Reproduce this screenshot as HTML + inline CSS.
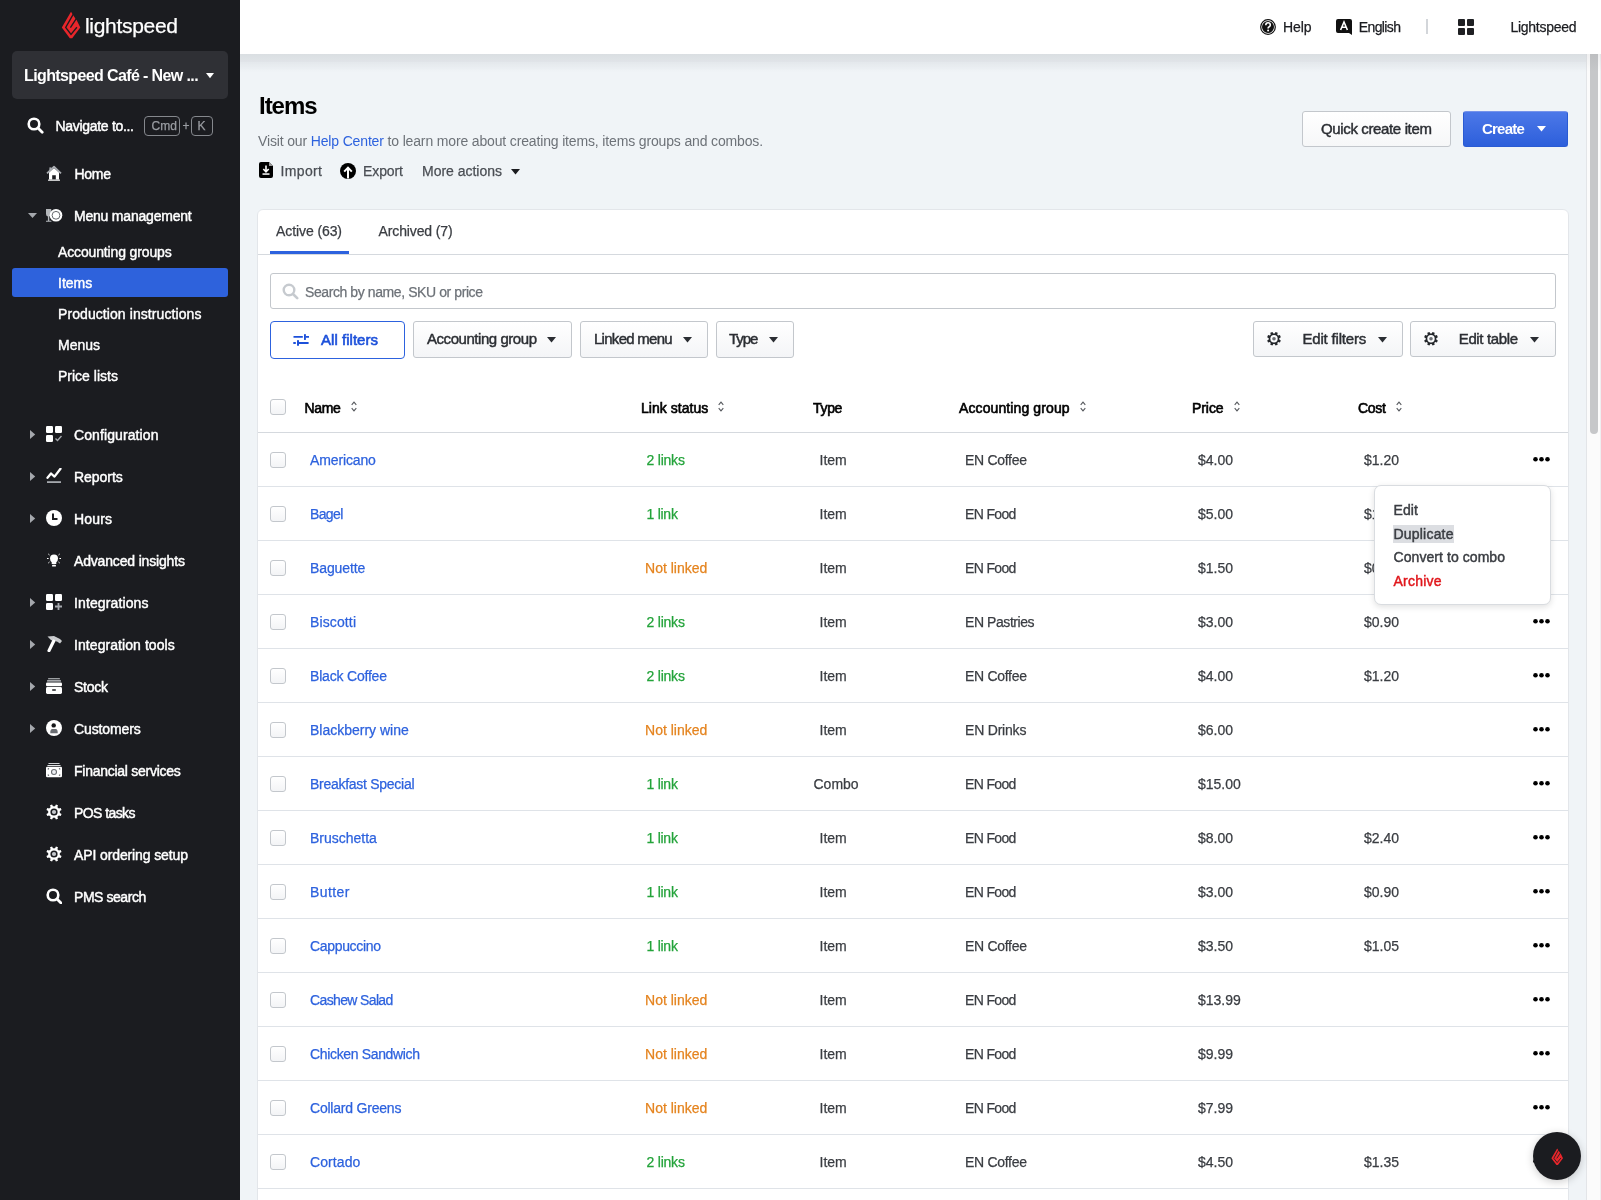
<!DOCTYPE html><html><head><meta charset="utf-8"><style>
html,body{margin:0;padding:0;width:1601px;height:1200px;overflow:hidden;background:#f0f4f7;font-family:"Liberation Sans",sans-serif;}
#root{position:relative;width:1601px;height:1200px;overflow:hidden;will-change:transform;}
</style></head><body><div id="root">
<div style="position:absolute;left:0px;top:0px;width:240px;height:1200px;background:#1b1c20;"></div>
<svg style="position:absolute;left:58px;top:8px" width="28" height="34" viewBox="0 0 28 34"><path d="M13 3.8 L17.5 10.8 L18.6 12 L22.3 19.5 L14.2 30.2 L11.8 30.2 L3.8 19.5 Z" fill="#e8262b"/><path d="M15.6 5.6 L7.7 19.5 L13 26.4 L18.9 19.2 M18.3 10.6 L12.4 19.7" fill="none" stroke="#1b1c20" stroke-width="1.35" stroke-linejoin="miter"/></svg>
<div style="position:absolute;left:85px;top:15px;font-size:21px;line-height:21px;color:#fff;white-space:nowrap;letter-spacing:-0.304px;-webkit-text-stroke:0.25px #fff;">lightspeed</div>
<div style="position:absolute;left:12px;top:51px;width:216px;height:48px;background:#2f3035;border-radius:5px;"></div>
<div style="position:absolute;left:24px;top:68px;font-size:16px;line-height:16px;color:#fff;white-space:nowrap;font-weight:bold;letter-spacing:-0.615px;">Lightspeed Café - New ...</div>
<svg style="position:absolute;left:205.5px;top:73px" width="8" height="6" viewBox="0 0 8 6"><path d="M0 0 H8 L4 5.3 Z" fill="#fff"/></svg>
<svg style="position:absolute;left:27px;top:117px" width="17" height="17" viewBox="0 0 17 17"><circle cx="7" cy="7" r="5.3" fill="none" stroke="#fff" stroke-width="2.6"/><path d="M11 11 L15.2 15.2" stroke="#fff" stroke-width="2.8" stroke-linecap="round"/></svg>
<div style="position:absolute;left:55.5px;top:119px;font-size:14px;line-height:14px;color:#fff;white-space:nowrap;letter-spacing:-0.307px;-webkit-text-stroke:0.45px #fff;">Navigate to...</div>
<div style="position:absolute;left:144px;top:116px;width:34px;height:18px;border:1px solid #85888d;border-radius:4px;"></div>
<div style="position:absolute;left:151.5px;top:120px;font-size:12px;line-height:12px;color:#9a9da2;white-space:nowrap;-webkit-text-stroke:0.25px #9a9da2;font-family:"Liberation Mono",monospace;letter-spacing:-0.9px;">Cmd</div>
<div style="position:absolute;left:182.5px;top:120px;font-size:12px;line-height:12px;color:#9a9da2;white-space:nowrap;-webkit-text-stroke:0.25px #9a9da2;">+</div>
<div style="position:absolute;left:191px;top:116px;width:20px;height:18px;border:1px solid #85888d;border-radius:4px;"></div>
<div style="position:absolute;left:197.5px;top:120px;font-size:12px;line-height:12px;color:#9a9da2;white-space:nowrap;-webkit-text-stroke:0.25px #9a9da2;font-family:"Liberation Mono",monospace;">K</div>
<svg style="position:absolute;left:46px;top:165px" width="16" height="16" viewBox="0 0 16 16"><path d="M3 7.5 L8 3 L13 7.5 V14.6 H9.8 V10.2 H6.2 V14.6 H3 Z" fill="#fff"/><rect x="2" y="14.4" width="12" height="1.4" rx="0.5" fill="#fff"/><path d="M1 8.4 L8 1.6 L15 8.4" fill="none" stroke="#a9acb1" stroke-width="1.7" stroke-linejoin="round"/><rect x="3.4" y="2.4" width="2" height="3" fill="#a9acb1"/></svg>
<div style="position:absolute;left:74.5px;top:167px;font-size:14px;line-height:14px;color:#fff;white-space:nowrap;letter-spacing:-0.282px;-webkit-text-stroke:0.45px #fff;">Home</div>
<svg style="position:absolute;left:28px;top:213px" width="9" height="6" viewBox="0 0 9 6"><path d="M0 0 H9 L4.5 5 Z" fill="#a5a8ad"/></svg>
<svg style="position:absolute;left:45px;top:207px" width="18" height="16" viewBox="0 0 18 16"><path d="M1 2 H6.2 V7 Q6.2 9.3 4.3 9.6 V13.8 H6.4 V14.8 H1 V13.8 H2.9 V9.6 Q1 9.3 1 7 Z" fill="#b4b7bb"/><circle cx="11" cy="8.3" r="6.3" fill="#fff"/><circle cx="11" cy="8.3" r="3.9" fill="none" stroke="#55585d" stroke-width="0.9"/></svg>
<div style="position:absolute;left:74px;top:209px;font-size:14px;line-height:14px;color:#fff;white-space:nowrap;letter-spacing:-0.209px;-webkit-text-stroke:0.45px #fff;">Menu management</div>
<div style="position:absolute;left:12px;top:268px;width:216px;height:29px;background:#2e62dc;border-radius:3px;"></div>
<div style="position:absolute;left:58px;top:245px;font-size:14px;line-height:14px;color:#fff;white-space:nowrap;letter-spacing:-0.142px;-webkit-text-stroke:0.4px #fff;">Accounting groups</div>
<div style="position:absolute;left:58px;top:276px;font-size:14px;line-height:14px;color:#fff;white-space:nowrap;-webkit-text-stroke:0.4px #fff;">Items</div>
<div style="position:absolute;left:58px;top:307px;font-size:14px;line-height:14px;color:#fff;white-space:nowrap;letter-spacing:0.081px;-webkit-text-stroke:0.4px #fff;">Production instructions</div>
<div style="position:absolute;left:58px;top:338px;font-size:14px;line-height:14px;color:#fff;white-space:nowrap;-webkit-text-stroke:0.4px #fff;">Menus</div>
<div style="position:absolute;left:58px;top:369px;font-size:14px;line-height:14px;color:#fff;white-space:nowrap;-webkit-text-stroke:0.4px #fff;">Price lists</div>
<svg style="position:absolute;left:30px;top:430px" width="6" height="9" viewBox="0 0 6 9"><path d="M0 0 V9 L5.2 4.5 Z" fill="#a5a8ad"/></svg>
<svg style="position:absolute;left:46px;top:426px" width="16" height="16" viewBox="0 0 16 16"><rect x="0" y="0" width="7" height="7" rx="1.2" fill="#fff"/><rect x="9" y="0" width="7" height="7" rx="1.2" fill="#fff"/><rect x="0" y="9" width="7" height="7" rx="1.2" fill="#fff"/><path d="M9.5 12.5 L11.5 14.5 L15.5 10" fill="none" stroke="#a5a8ad" stroke-width="1.4"/></svg>
<div style="position:absolute;left:74px;top:428px;font-size:14px;line-height:14px;color:#fff;white-space:nowrap;letter-spacing:0.102px;-webkit-text-stroke:0.45px #fff;">Configuration</div>
<svg style="position:absolute;left:30px;top:472px" width="6" height="9" viewBox="0 0 6 9"><path d="M0 0 V9 L5.2 4.5 Z" fill="#a5a8ad"/></svg>
<svg style="position:absolute;left:46px;top:468px" width="16" height="16" viewBox="0 0 16 16"><path d="M1.5 9.8 L5 5.5 L8.5 8.6 L14.5 0.8" fill="none" stroke="#fff" stroke-width="2.3" stroke-linejoin="round" stroke-linecap="round"/><rect x="1" y="13.2" width="14" height="1.8" fill="#a5a8ad"/></svg>
<div style="position:absolute;left:74px;top:470px;font-size:14px;line-height:14px;color:#fff;white-space:nowrap;letter-spacing:-0.037px;-webkit-text-stroke:0.45px #fff;">Reports</div>
<svg style="position:absolute;left:30px;top:514px" width="6" height="9" viewBox="0 0 6 9"><path d="M0 0 V9 L5.2 4.5 Z" fill="#a5a8ad"/></svg>
<svg style="position:absolute;left:46px;top:510px" width="16" height="16" viewBox="0 0 16 16"><circle cx="8" cy="8" r="8" fill="#fff"/><path d="M7 3.5 V9 H11.5" fill="none" stroke="#1b1c20" stroke-width="2"/></svg>
<div style="position:absolute;left:74px;top:512px;font-size:14px;line-height:14px;color:#fff;white-space:nowrap;letter-spacing:0.164px;-webkit-text-stroke:0.45px #fff;">Hours</div>
<svg style="position:absolute;left:46px;top:552px" width="16" height="16" viewBox="0 0 16 16"><path d="M8 2.5 Q12 2.5 12 6.5 Q12 8.8 10.3 10.2 V12 H5.7 V10.2 Q4 8.8 4 6.5 Q4 2.5 8 2.5 Z" fill="#fff"/><rect x="6" y="12.8" width="4" height="1.8" rx="0.9" fill="#fff"/><path d="M1 6.5 H2.6 M13.4 6.5 H15 M2.3 2 L3.5 3 M13.7 2 L12.5 3 M2.3 11 L3.5 10 M13.7 11 L12.5 10" stroke="#fff" stroke-width="1"/></svg>
<div style="position:absolute;left:74px;top:554px;font-size:14px;line-height:14px;color:#fff;white-space:nowrap;letter-spacing:-0.170px;-webkit-text-stroke:0.45px #fff;">Advanced insights</div>
<svg style="position:absolute;left:30px;top:598px" width="6" height="9" viewBox="0 0 6 9"><path d="M0 0 V9 L5.2 4.5 Z" fill="#a5a8ad"/></svg>
<svg style="position:absolute;left:46px;top:594px" width="16" height="16" viewBox="0 0 16 16"><rect x="0" y="0" width="7" height="7" rx="1.2" fill="#fff"/><rect x="9" y="0" width="7" height="7" rx="1.2" fill="#fff"/><rect x="0" y="9" width="7" height="7" rx="1.2" fill="#fff"/><path d="M12.5 9 V16 M9 12.5 H16" stroke="#a5a8ad" stroke-width="1.8"/></svg>
<div style="position:absolute;left:74px;top:596px;font-size:14px;line-height:14px;color:#fff;white-space:nowrap;letter-spacing:0.122px;-webkit-text-stroke:0.45px #fff;">Integrations</div>
<svg style="position:absolute;left:30px;top:640px" width="6" height="9" viewBox="0 0 6 9"><path d="M0 0 V9 L5.2 4.5 Z" fill="#a5a8ad"/></svg>
<svg style="position:absolute;left:46px;top:636px" width="16" height="16" viewBox="0 0 16 16"><path d="M1.5 0.6 L8 0 L14 3 L16 5 L14 7.6 L11 5.6 L7 5 L5 4 Z" fill="#c9cbce"/><path d="M7.6 5.2 L3 14.6" stroke="#fff" stroke-width="3.2" stroke-linecap="round"/></svg>
<div style="position:absolute;left:74px;top:638px;font-size:14px;line-height:14px;color:#fff;white-space:nowrap;letter-spacing:0.071px;-webkit-text-stroke:0.45px #fff;">Integration tools</div>
<svg style="position:absolute;left:30px;top:682px" width="6" height="9" viewBox="0 0 6 9"><path d="M0 0 V9 L5.2 4.5 Z" fill="#a5a8ad"/></svg>
<svg style="position:absolute;left:46px;top:678px" width="16" height="16" viewBox="0 0 16 16"><rect x="2" y="0.2" width="12" height="1.1" rx="0.5" fill="#c8cacd"/><rect x="1" y="2.2" width="14" height="1.2" rx="0.5" fill="#d6d8db"/><rect x="0" y="4.6" width="16" height="3.6" rx="1.2" fill="#fff"/><rect x="0" y="9" width="16" height="7" rx="1.4" fill="#fff"/><rect x="6" y="11.3" width="4" height="1.4" rx="0.7" fill="#1b1c20"/></svg>
<div style="position:absolute;left:74px;top:680px;font-size:14px;line-height:14px;color:#fff;white-space:nowrap;letter-spacing:-0.254px;-webkit-text-stroke:0.45px #fff;">Stock</div>
<svg style="position:absolute;left:30px;top:724px" width="6" height="9" viewBox="0 0 6 9"><path d="M0 0 V9 L5.2 4.5 Z" fill="#a5a8ad"/></svg>
<svg style="position:absolute;left:46px;top:720px" width="16" height="16" viewBox="0 0 16 16"><circle cx="8" cy="8" r="8" fill="#fff"/><path d="M4.3 13.2 Q4 9.6 6 8.9 H10 Q12 9.6 11.7 13.2 Z" fill="#6b6e73"/><circle cx="7.7" cy="5.4" r="2.2" fill="#151618"/></svg>
<div style="position:absolute;left:74px;top:722px;font-size:14px;line-height:14px;color:#fff;white-space:nowrap;letter-spacing:-0.117px;-webkit-text-stroke:0.45px #fff;">Customers</div>
<svg style="position:absolute;left:46px;top:762px" width="16" height="16" viewBox="0 0 16 16"><rect x="2.3" y="0.9" width="11.4" height="1.1" rx="0.5" fill="#d0d2d5"/><rect x="1.3" y="2.9" width="13.4" height="1.1" rx="0.5" fill="#e0e2e4"/><rect x="0" y="4.8" width="16" height="10.4" rx="1.3" fill="#fff"/><circle cx="8" cy="10" r="2.5" fill="#eef0f4" stroke="#6b6e73" stroke-width="1.1"/><path d="M1.8 7.4 L2.9 6.3 M14.2 7.4 L13.1 6.3 M1.8 12.6 L2.9 13.7 M14.2 12.6 L13.1 13.7" stroke="#55585d" stroke-width="1.1"/></svg>
<div style="position:absolute;left:74px;top:764px;font-size:14px;line-height:14px;color:#fff;white-space:nowrap;letter-spacing:-0.265px;-webkit-text-stroke:0.45px #fff;">Financial services</div>
<svg style="position:absolute;left:46px;top:804px" width="16" height="16" viewBox="0 0 16 16"><path fill="#fff" d="M13.81 9.01 L15.55 9.94 L14.71 11.97 L12.83 11.39 L11.39 12.83 L11.97 14.71 L9.94 15.55 L9.01 13.81 L6.99 13.81 L6.06 15.55 L4.03 14.71 L4.61 12.83 L3.17 11.39 L1.29 11.97 L0.45 9.94 L2.19 9.01 L2.19 6.99 L0.45 6.06 L1.29 4.03 L3.17 4.61 L4.61 3.17 L4.03 1.29 L6.06 0.45 L6.99 2.19 L9.01 2.19 L9.94 0.45 L11.97 1.29 L11.39 3.17 L12.83 4.61 L14.71 4.03 L15.55 6.06 L13.81 6.99 Z"/><circle cx="8" cy="8" r="3.6" fill="#1b1c20"/><circle cx="8" cy="8" r="2.1" fill="#c5c8cd"/></svg>
<div style="position:absolute;left:74px;top:806px;font-size:14px;line-height:14px;color:#fff;white-space:nowrap;letter-spacing:-0.579px;-webkit-text-stroke:0.45px #fff;">POS tasks</div>
<svg style="position:absolute;left:46px;top:846px" width="16" height="16" viewBox="0 0 16 16"><path fill="#fff" d="M13.81 9.01 L15.55 9.94 L14.71 11.97 L12.83 11.39 L11.39 12.83 L11.97 14.71 L9.94 15.55 L9.01 13.81 L6.99 13.81 L6.06 15.55 L4.03 14.71 L4.61 12.83 L3.17 11.39 L1.29 11.97 L0.45 9.94 L2.19 9.01 L2.19 6.99 L0.45 6.06 L1.29 4.03 L3.17 4.61 L4.61 3.17 L4.03 1.29 L6.06 0.45 L6.99 2.19 L9.01 2.19 L9.94 0.45 L11.97 1.29 L11.39 3.17 L12.83 4.61 L14.71 4.03 L15.55 6.06 L13.81 6.99 Z"/><circle cx="8" cy="8" r="3.6" fill="#1b1c20"/><circle cx="8" cy="8" r="2.1" fill="#c5c8cd"/></svg>
<div style="position:absolute;left:74px;top:848px;font-size:14px;line-height:14px;color:#fff;white-space:nowrap;letter-spacing:-0.115px;-webkit-text-stroke:0.45px #fff;">API ordering setup</div>
<svg style="position:absolute;left:46px;top:888px" width="16" height="16" viewBox="0 0 16 16"><circle cx="7" cy="7" r="5.3" fill="none" stroke="#fff" stroke-width="2.6"/><path d="M11 11 L15.2 15.2" stroke="#fff" stroke-width="2.8" stroke-linecap="round"/></svg>
<div style="position:absolute;left:74px;top:890px;font-size:14px;line-height:14px;color:#fff;white-space:nowrap;letter-spacing:-0.444px;-webkit-text-stroke:0.45px #fff;">PMS search</div>
<div style="position:absolute;left:240px;top:0px;width:1361px;height:54px;background:#fff;z-index:2;"></div>
<div style="position:absolute;left:240px;top:54px;width:1346px;height:18px;background:linear-gradient(rgba(40,45,60,0.11),rgba(40,45,60,0.08) 44%,rgba(40,45,60,0.055) 47%,rgba(40,45,60,0.03) 72%,rgba(40,45,60,0));z-index:2;"></div>
<div style="position:absolute;left:1586px;top:54px;width:15px;height:18px;background:linear-gradient(rgba(40,45,55,0.06),rgba(40,45,55,0));z-index:2;"></div>
<div style="position:absolute;left:0;top:0;width:1601px;height:54px;z-index:3;">
<svg style="position:absolute;left:1260px;top:19px" width="16" height="16" viewBox="0 0 16 16"><circle cx="8" cy="8" r="7.3" fill="#fff" stroke="#111" stroke-width="1.2"/><circle cx="8" cy="8" r="6" fill="#111"/><path d="M5.8 6.2 Q5.8 3.8 8 3.8 Q10.3 3.8 10.3 6 Q10.3 7.3 8.9 8 Q8.1 8.4 8.1 9.4" fill="none" stroke="#fff" stroke-width="1.6"/><circle cx="8.1" cy="11.6" r="1" fill="#fff"/></svg>
<div style="position:absolute;left:1283px;top:20px;font-size:14px;line-height:14px;color:#1b1c20;white-space:nowrap;letter-spacing:-0.097px;-webkit-text-stroke:0.25px #1b1c20;">Help</div>
<svg style="position:absolute;left:1336px;top:19px" width="16" height="16" viewBox="0 0 16 16"><path d="M2 0 H14 Q16 0 16 2 V16 L13 14 H2 Q0 14 0 12 V2 Q0 0 2 0 Z" fill="#111"/><path d="M4.6 11 L8 3 L11.4 11 M5.9 8.2 H10.1" fill="none" stroke="#fff" stroke-width="1.6"/></svg>
<div style="position:absolute;left:1358.75px;top:20px;font-size:14px;line-height:14px;color:#1b1c20;white-space:nowrap;letter-spacing:-0.611px;-webkit-text-stroke:0.25px #1b1c20;">English</div>
<div style="position:absolute;left:1426px;top:19px;width:2px;height:15px;background:#d3d6da;"></div>
<svg style="position:absolute;left:1458px;top:19px" width="16" height="16" viewBox="0 0 16 16"><rect x="0" y="0" width="7" height="7" rx="1" fill="#1f2023"/><rect x="9" y="0" width="7" height="7" rx="1" fill="#1f2023"/><rect x="0" y="9" width="7" height="7" rx="1" fill="#1f2023"/><rect x="9" y="9" width="7" height="7" rx="1" fill="#1f2023"/></svg>
<div style="position:absolute;left:1510.5px;top:20px;font-size:14px;line-height:14px;color:#1b1c20;white-space:nowrap;letter-spacing:-0.278px;-webkit-text-stroke:0.25px #1b1c20;">Lightspeed</div>
</div>
<div style="position:absolute;left:1586px;top:54px;width:15px;height:1146px;background:#fbfbfb;border-left:1px solid #e3e5e8;border-right:1px solid #eeeff1;box-sizing:border-box;"></div>
<div style="position:absolute;left:1590px;top:54px;width:8px;height:380px;background:#c6c7c9;border-radius:0 0 4px 4px;"></div>
<div style="position:absolute;left:259px;top:94px;font-size:24px;line-height:24px;color:#000;white-space:nowrap;font-weight:bold;letter-spacing:-1.024px;">Items</div>
<div style="position:absolute;left:258px;top:134px;font-size:14px;line-height:14px;color:#6d7278;white-space:nowrap;letter-spacing:-0.15px">Visit our <span style="color:#2d62de">Help Center</span> to learn more about creating items, items groups and combos.</div>
<svg style="position:absolute;left:259px;top:162px" width="14" height="16" viewBox="0 0 14 16"><path d="M2 0 H10 L14 4 V14 Q14 16 12 16 H2 Q0 16 0 14 V2 Q0 0 2 0 Z" fill="#000"/><path d="M10 0 V4 H14" fill="#9a9a9a"/><path d="M7 3.5 V9.5 M4.3 7 L7 9.8 L9.7 7" fill="none" stroke="#fff" stroke-width="1.6"/><rect x="3.5" y="11.3" width="7" height="1.5" fill="#fff"/></svg>
<div style="position:absolute;left:280.6px;top:164px;font-size:14px;line-height:14px;color:#4a4e54;white-space:nowrap;letter-spacing:0.325px;-webkit-text-stroke:0.25px #4a4e54;">Import</div>
<svg style="position:absolute;left:340px;top:163px" width="16" height="16" viewBox="0 0 16 16"><circle cx="8" cy="8" r="8" fill="#000"/><path d="M8 15.5 V5 M4.2 8.6 L8 4.6 L11.8 8.6" fill="none" stroke="#fff" stroke-width="2"/></svg>
<div style="position:absolute;left:363px;top:164px;font-size:14px;line-height:14px;color:#4a4e54;white-space:nowrap;letter-spacing:-0.092px;-webkit-text-stroke:0.25px #4a4e54;">Export</div>
<div style="position:absolute;left:422px;top:164px;font-size:14px;line-height:14px;color:#4a4e54;white-space:nowrap;letter-spacing:-0.013px;-webkit-text-stroke:0.25px #4a4e54;">More actions</div>
<svg style="position:absolute;left:511px;top:169px" width="9" height="6" viewBox="0 0 9 6"><path d="M0 0 H9 L4.5 5.5 Z" fill="#1b1c20"/></svg>
<div style="position:absolute;left:1302px;top:111px;width:149px;height:36px;box-sizing:border-box;border:1px solid #c3c7cc;border-radius:3px;background:linear-gradient(#fff,#f6f7f8);"></div>
<div style="position:absolute;left:1321px;top:121px;font-size:15px;line-height:15px;color:#2b2e33;white-space:nowrap;letter-spacing:-0.363px;-webkit-text-stroke:0.45px #2b2e33;">Quick create item</div>
<div style="position:absolute;left:1463px;top:111px;width:105px;height:36px;box-sizing:border-box;border:1px solid #2a5bd3;border-top-color:#7593ea;border-radius:3px;background:linear-gradient(#4c78e8,#2d5fdb);"></div>
<div style="position:absolute;left:1482px;top:121px;font-size:15px;line-height:15px;color:#fff;white-space:nowrap;font-weight:bold;letter-spacing:-0.778px;">Create</div>
<svg style="position:absolute;left:1537px;top:126px" width="9" height="6" viewBox="0 0 9 6"><path d="M0 0 H9 L4.5 5.5 Z" fill="#fff"/></svg>
<div style="position:absolute;left:257px;top:209px;width:1312px;height:1100px;box-sizing:border-box;background:#fff;border:1px solid #e3e6ea;border-radius:6px;"></div>
<div style="position:absolute;left:276px;top:224px;font-size:14px;line-height:14px;color:#3a3d42;white-space:nowrap;letter-spacing:-0.091px;-webkit-text-stroke:0.25px #3a3d42;">Active (63)</div>
<div style="position:absolute;left:378.6px;top:224px;font-size:14px;line-height:14px;color:#3a3d42;white-space:nowrap;letter-spacing:-0.134px;-webkit-text-stroke:0.25px #3a3d42;">Archived (7)</div>
<div style="position:absolute;left:258px;top:254px;width:1310px;height:1px;background:#d5d9de;"></div>
<div style="position:absolute;left:270px;top:251px;width:79px;height:3px;background:#2d62de;"></div>
<div style="position:absolute;left:270px;top:273px;width:1286px;height:36px;box-sizing:border-box;border:1px solid #c3c7cc;border-radius:3px;background:#fff;"></div>
<svg style="position:absolute;left:282px;top:283px" width="17" height="17" viewBox="0 0 17 17"><circle cx="7" cy="7" r="5.3" fill="none" stroke="#c6cacf" stroke-width="2.4"/><path d="M11 11 L15.2 15.2" stroke="#c6cacf" stroke-width="2.6" stroke-linecap="round"/></svg>
<div style="position:absolute;left:305px;top:285px;font-size:14px;line-height:14px;color:#6d7278;white-space:nowrap;letter-spacing:-0.411px;-webkit-text-stroke:0.25px #6d7278;">Search by name, SKU or price</div>
<div style="position:absolute;left:270px;top:321px;width:135px;height:38px;box-sizing:border-box;border:1.5px solid #2d62de;border-radius:4px;background:#fff;"></div>
<div style="position:absolute;left:321px;top:332px;font-size:15px;line-height:15px;color:#1c50da;white-space:nowrap;letter-spacing:0.033px;-webkit-text-stroke:0.6px #1c50da;">All filters</div>
<svg style="position:absolute;left:293px;top:333px" width="17" height="14" viewBox="0 0 17 14"><path d="M0.5 3.9 H9.8 M12.8 3.9 H16 M0.3 10 H2.8 M6 10 H15.6" stroke="#1c50da" stroke-width="1.9"/><rect x="11" y="1" width="1.9" height="5.9" rx="0.4" fill="#1c50da"/><rect x="4" y="7" width="2" height="5.8" rx="0.4" fill="#1c50da"/></svg>
<div style="position:absolute;left:413px;top:321px;width:159px;height:37px;box-sizing:border-box;border:1px solid #c3c7cc;border-radius:3px;background:linear-gradient(#fff,#f4f5f7);"></div>
<div style="position:absolute;left:427px;top:331px;font-size:15px;line-height:15px;color:#2b2e33;white-space:nowrap;letter-spacing:-0.450px;-webkit-text-stroke:0.45px #2b2e33;">Accounting group</div>
<svg style="position:absolute;left:547px;top:337px" width="9" height="6" viewBox="0 0 9 6"><path d="M0 0 H9 L4.5 5.5 Z" fill="#2b2e33"/></svg>
<div style="position:absolute;left:580px;top:321px;width:128px;height:37px;box-sizing:border-box;border:1px solid #c3c7cc;border-radius:3px;background:linear-gradient(#fff,#f4f5f7);"></div>
<div style="position:absolute;left:594px;top:331px;font-size:15px;line-height:15px;color:#2b2e33;white-space:nowrap;letter-spacing:-0.719px;-webkit-text-stroke:0.45px #2b2e33;">Linked menu</div>
<svg style="position:absolute;left:683px;top:337px" width="9" height="6" viewBox="0 0 9 6"><path d="M0 0 H9 L4.5 5.5 Z" fill="#2b2e33"/></svg>
<div style="position:absolute;left:716px;top:321px;width:78px;height:37px;box-sizing:border-box;border:1px solid #c3c7cc;border-radius:3px;background:linear-gradient(#fff,#f4f5f7);"></div>
<div style="position:absolute;left:729px;top:331px;font-size:15px;line-height:15px;color:#2b2e33;white-space:nowrap;letter-spacing:-1.040px;-webkit-text-stroke:0.45px #2b2e33;">Type</div>
<svg style="position:absolute;left:769px;top:337px" width="9" height="6" viewBox="0 0 9 6"><path d="M0 0 H9 L4.5 5.5 Z" fill="#2b2e33"/></svg>
<div style="position:absolute;left:1253px;top:321px;width:150px;height:36px;box-sizing:border-box;border:1px solid #c3c7cc;border-radius:3px;background:linear-gradient(#fff,#f4f5f7);"></div>
<svg style="position:absolute;left:1265px;top:331px" width="17" height="17" viewBox="0 0 17 17"><path fill="#24272b" d="M14.26 8.42 L15.82 9.38 L14.94 11.50 L13.16 11.08 L12.28 11.96 L12.70 13.74 L10.58 14.62 L9.62 13.06 L8.38 13.06 L7.42 14.62 L5.30 13.74 L5.72 11.96 L4.84 11.08 L3.06 11.50 L2.18 9.38 L3.74 8.42 L3.74 7.18 L2.18 6.22 L3.06 4.10 L4.84 4.52 L5.72 3.64 L5.30 1.86 L7.42 0.98 L8.38 2.54 L9.62 2.54 L10.58 0.98 L12.70 1.86 L12.28 3.64 L13.16 4.52 L14.94 4.10 L15.82 6.22 L14.26 7.18 Z"/><circle cx="9" cy="7.8" r="3.7" fill="#fafbfc"/><circle cx="9" cy="7.8" r="1.8" fill="#6b6e73"/></svg>
<div style="position:absolute;left:1302.5px;top:331px;font-size:15px;line-height:15px;color:#2b2e33;white-space:nowrap;letter-spacing:-0.191px;-webkit-text-stroke:0.45px #2b2e33;">Edit filters</div>
<svg style="position:absolute;left:1378px;top:337px" width="9" height="6" viewBox="0 0 9 6"><path d="M0 0 H9 L4.5 5.5 Z" fill="#2b2e33"/></svg>
<div style="position:absolute;left:1410px;top:321px;width:146px;height:36px;box-sizing:border-box;border:1px solid #c3c7cc;border-radius:3px;background:linear-gradient(#fff,#f4f5f7);"></div>
<svg style="position:absolute;left:1422px;top:331px" width="17" height="17" viewBox="0 0 17 17"><path fill="#24272b" d="M14.26 8.42 L15.82 9.38 L14.94 11.50 L13.16 11.08 L12.28 11.96 L12.70 13.74 L10.58 14.62 L9.62 13.06 L8.38 13.06 L7.42 14.62 L5.30 13.74 L5.72 11.96 L4.84 11.08 L3.06 11.50 L2.18 9.38 L3.74 8.42 L3.74 7.18 L2.18 6.22 L3.06 4.10 L4.84 4.52 L5.72 3.64 L5.30 1.86 L7.42 0.98 L8.38 2.54 L9.62 2.54 L10.58 0.98 L12.70 1.86 L12.28 3.64 L13.16 4.52 L14.94 4.10 L15.82 6.22 L14.26 7.18 Z"/><circle cx="9" cy="7.8" r="3.7" fill="#fafbfc"/><circle cx="9" cy="7.8" r="1.8" fill="#6b6e73"/></svg>
<div style="position:absolute;left:1458.75px;top:331px;font-size:15px;line-height:15px;color:#2b2e33;white-space:nowrap;letter-spacing:-0.366px;-webkit-text-stroke:0.45px #2b2e33;">Edit table</div>
<svg style="position:absolute;left:1530px;top:337px" width="9" height="6" viewBox="0 0 9 6"><path d="M0 0 H9 L4.5 5.5 Z" fill="#2b2e33"/></svg>
<div style="position:absolute;left:270px;top:399px;width:16px;height:16px;box-sizing:border-box;border:1px solid #c3c7cc;border-radius:3px;background:linear-gradient(#fff,#f3f4f6);"></div>
<div style="position:absolute;left:304.5px;top:401px;font-size:14px;line-height:14px;color:#000;white-space:nowrap;letter-spacing:-0.365px;-webkit-text-stroke:0.6px #000;">Name</div>
<svg style="position:absolute;left:351px;top:401px" width="6" height="11" viewBox="0 0 6 11"><path d="M0.7 3.8 L3 1.2 L5.3 3.8 M0.7 7.2 L3 9.8 L5.3 7.2" fill="none" stroke="#55585d" stroke-width="1.1"/></svg>
<div style="position:absolute;left:641px;top:401px;font-size:14px;line-height:14px;color:#000;white-space:nowrap;letter-spacing:0.028px;-webkit-text-stroke:0.6px #000;">Link status</div>
<svg style="position:absolute;left:718px;top:401px" width="6" height="11" viewBox="0 0 6 11"><path d="M0.7 3.8 L3 1.2 L5.3 3.8 M0.7 7.2 L3 9.8 L5.3 7.2" fill="none" stroke="#55585d" stroke-width="1.1"/></svg>
<div style="position:absolute;left:813px;top:401px;font-size:14px;line-height:14px;color:#000;white-space:nowrap;letter-spacing:-0.317px;-webkit-text-stroke:0.6px #000;">Type</div>
<div style="position:absolute;left:959px;top:401px;font-size:14px;line-height:14px;color:#000;white-space:nowrap;letter-spacing:0.109px;-webkit-text-stroke:0.6px #000;">Accounting group</div>
<svg style="position:absolute;left:1080px;top:401px" width="6" height="11" viewBox="0 0 6 11"><path d="M0.7 3.8 L3 1.2 L5.3 3.8 M0.7 7.2 L3 9.8 L5.3 7.2" fill="none" stroke="#55585d" stroke-width="1.1"/></svg>
<div style="position:absolute;left:1192px;top:401px;font-size:14px;line-height:14px;color:#000;white-space:nowrap;letter-spacing:-0.074px;-webkit-text-stroke:0.6px #000;">Price</div>
<svg style="position:absolute;left:1234px;top:401px" width="6" height="11" viewBox="0 0 6 11"><path d="M0.7 3.8 L3 1.2 L5.3 3.8 M0.7 7.2 L3 9.8 L5.3 7.2" fill="none" stroke="#55585d" stroke-width="1.1"/></svg>
<div style="position:absolute;left:1358px;top:401px;font-size:14px;line-height:14px;color:#000;white-space:nowrap;letter-spacing:-0.262px;-webkit-text-stroke:0.6px #000;">Cost</div>
<svg style="position:absolute;left:1396px;top:401px" width="6" height="11" viewBox="0 0 6 11"><path d="M0.7 3.8 L3 1.2 L5.3 3.8 M0.7 7.2 L3 9.8 L5.3 7.2" fill="none" stroke="#55585d" stroke-width="1.1"/></svg>
<div style="position:absolute;left:258px;top:432px;width:1310px;height:1px;background:#d5d9de;"></div>
<div style="position:absolute;left:270px;top:452px;width:16px;height:16px;box-sizing:border-box;border:1px solid #c3c7cc;border-radius:3px;background:linear-gradient(#fff,#f3f4f6);"></div>
<div style="position:absolute;left:310px;top:453px;font-size:14px;line-height:14px;color:#2d62de;white-space:nowrap;letter-spacing:-0.127px;-webkit-text-stroke:0.25px #2d62de;">Americano</div>
<div style="position:absolute;left:646.5px;top:453px;font-size:14px;line-height:14px;color:#23a33a;white-space:nowrap;letter-spacing:-0.214px;-webkit-text-stroke:0.25px #23a33a;">2 links</div>
<div style="position:absolute;left:819.5px;top:453px;font-size:14px;line-height:14px;color:#3a3d42;white-space:nowrap;-webkit-text-stroke:0.25px #3a3d42;">Item</div>
<div style="position:absolute;left:965px;top:453px;font-size:14px;line-height:14px;color:#3a3d42;white-space:nowrap;letter-spacing:-0.292px;-webkit-text-stroke:0.25px #3a3d42;">EN Coffee</div>
<div style="position:absolute;left:1198px;top:453px;font-size:14px;line-height:14px;color:#3a3d42;white-space:nowrap;-webkit-text-stroke:0.25px #3a3d42;">$4.00</div>
<div style="position:absolute;left:1364px;top:453px;font-size:14px;line-height:14px;color:#3a3d42;white-space:nowrap;-webkit-text-stroke:0.25px #3a3d42;">$1.20</div>
<svg style="position:absolute;left:1533px;top:456px" width="17" height="7" viewBox="0 0 17 7"><circle cx="2.5" cy="3.2" r="2.3" fill="#000"/><circle cx="8.5" cy="3.2" r="2.3" fill="#000"/><circle cx="14.5" cy="3.2" r="2.3" fill="#000"/></svg>
<div style="position:absolute;left:258px;top:486px;width:1310px;height:1px;background:#dfe3e8;"></div>
<div style="position:absolute;left:270px;top:506px;width:16px;height:16px;box-sizing:border-box;border:1px solid #c3c7cc;border-radius:3px;background:linear-gradient(#fff,#f3f4f6);"></div>
<div style="position:absolute;left:310px;top:507px;font-size:14px;line-height:14px;color:#2d62de;white-space:nowrap;letter-spacing:-0.639px;-webkit-text-stroke:0.25px #2d62de;">Bagel</div>
<div style="position:absolute;left:646.5px;top:507px;font-size:14px;line-height:14px;color:#23a33a;white-space:nowrap;letter-spacing:-0.256px;-webkit-text-stroke:0.25px #23a33a;">1 link</div>
<div style="position:absolute;left:819.5px;top:507px;font-size:14px;line-height:14px;color:#3a3d42;white-space:nowrap;-webkit-text-stroke:0.25px #3a3d42;">Item</div>
<div style="position:absolute;left:965px;top:507px;font-size:14px;line-height:14px;color:#3a3d42;white-space:nowrap;letter-spacing:-0.641px;-webkit-text-stroke:0.25px #3a3d42;">EN Food</div>
<div style="position:absolute;left:1198px;top:507px;font-size:14px;line-height:14px;color:#3a3d42;white-space:nowrap;-webkit-text-stroke:0.25px #3a3d42;">$5.00</div>
<div style="position:absolute;left:1364px;top:507px;font-size:14px;line-height:14px;color:#3a3d42;white-space:nowrap;-webkit-text-stroke:0.25px #3a3d42;">$1.50</div>
<div style="position:absolute;left:258px;top:540px;width:1310px;height:1px;background:#dfe3e8;"></div>
<div style="position:absolute;left:270px;top:560px;width:16px;height:16px;box-sizing:border-box;border:1px solid #c3c7cc;border-radius:3px;background:linear-gradient(#fff,#f3f4f6);"></div>
<div style="position:absolute;left:310px;top:561px;font-size:14px;line-height:14px;color:#2d62de;white-space:nowrap;letter-spacing:-0.114px;-webkit-text-stroke:0.25px #2d62de;">Baguette</div>
<div style="position:absolute;left:645px;top:561px;font-size:14px;line-height:14px;color:#e5841f;white-space:nowrap;letter-spacing:0.016px;-webkit-text-stroke:0.25px #e5841f;">Not linked</div>
<div style="position:absolute;left:819.5px;top:561px;font-size:14px;line-height:14px;color:#3a3d42;white-space:nowrap;-webkit-text-stroke:0.25px #3a3d42;">Item</div>
<div style="position:absolute;left:965px;top:561px;font-size:14px;line-height:14px;color:#3a3d42;white-space:nowrap;letter-spacing:-0.641px;-webkit-text-stroke:0.25px #3a3d42;">EN Food</div>
<div style="position:absolute;left:1198px;top:561px;font-size:14px;line-height:14px;color:#3a3d42;white-space:nowrap;-webkit-text-stroke:0.25px #3a3d42;">$1.50</div>
<div style="position:absolute;left:1364px;top:561px;font-size:14px;line-height:14px;color:#3a3d42;white-space:nowrap;-webkit-text-stroke:0.25px #3a3d42;">$0.45</div>
<div style="position:absolute;left:258px;top:594px;width:1310px;height:1px;background:#dfe3e8;"></div>
<div style="position:absolute;left:270px;top:614px;width:16px;height:16px;box-sizing:border-box;border:1px solid #c3c7cc;border-radius:3px;background:linear-gradient(#fff,#f3f4f6);"></div>
<div style="position:absolute;left:310px;top:615px;font-size:14px;line-height:14px;color:#2d62de;white-space:nowrap;letter-spacing:0.125px;-webkit-text-stroke:0.25px #2d62de;">Biscotti</div>
<div style="position:absolute;left:646.5px;top:615px;font-size:14px;line-height:14px;color:#23a33a;white-space:nowrap;letter-spacing:-0.214px;-webkit-text-stroke:0.25px #23a33a;">2 links</div>
<div style="position:absolute;left:819.5px;top:615px;font-size:14px;line-height:14px;color:#3a3d42;white-space:nowrap;-webkit-text-stroke:0.25px #3a3d42;">Item</div>
<div style="position:absolute;left:965px;top:615px;font-size:14px;line-height:14px;color:#3a3d42;white-space:nowrap;letter-spacing:-0.431px;-webkit-text-stroke:0.25px #3a3d42;">EN Pastries</div>
<div style="position:absolute;left:1198px;top:615px;font-size:14px;line-height:14px;color:#3a3d42;white-space:nowrap;-webkit-text-stroke:0.25px #3a3d42;">$3.00</div>
<div style="position:absolute;left:1364px;top:615px;font-size:14px;line-height:14px;color:#3a3d42;white-space:nowrap;-webkit-text-stroke:0.25px #3a3d42;">$0.90</div>
<svg style="position:absolute;left:1533px;top:618px" width="17" height="7" viewBox="0 0 17 7"><circle cx="2.5" cy="3.2" r="2.3" fill="#000"/><circle cx="8.5" cy="3.2" r="2.3" fill="#000"/><circle cx="14.5" cy="3.2" r="2.3" fill="#000"/></svg>
<div style="position:absolute;left:258px;top:648px;width:1310px;height:1px;background:#dfe3e8;"></div>
<div style="position:absolute;left:270px;top:668px;width:16px;height:16px;box-sizing:border-box;border:1px solid #c3c7cc;border-radius:3px;background:linear-gradient(#fff,#f3f4f6);"></div>
<div style="position:absolute;left:310px;top:669px;font-size:14px;line-height:14px;color:#2d62de;white-space:nowrap;letter-spacing:-0.193px;-webkit-text-stroke:0.25px #2d62de;">Black Coffee</div>
<div style="position:absolute;left:646.5px;top:669px;font-size:14px;line-height:14px;color:#23a33a;white-space:nowrap;letter-spacing:-0.214px;-webkit-text-stroke:0.25px #23a33a;">2 links</div>
<div style="position:absolute;left:819.5px;top:669px;font-size:14px;line-height:14px;color:#3a3d42;white-space:nowrap;-webkit-text-stroke:0.25px #3a3d42;">Item</div>
<div style="position:absolute;left:965px;top:669px;font-size:14px;line-height:14px;color:#3a3d42;white-space:nowrap;letter-spacing:-0.292px;-webkit-text-stroke:0.25px #3a3d42;">EN Coffee</div>
<div style="position:absolute;left:1198px;top:669px;font-size:14px;line-height:14px;color:#3a3d42;white-space:nowrap;-webkit-text-stroke:0.25px #3a3d42;">$4.00</div>
<div style="position:absolute;left:1364px;top:669px;font-size:14px;line-height:14px;color:#3a3d42;white-space:nowrap;-webkit-text-stroke:0.25px #3a3d42;">$1.20</div>
<svg style="position:absolute;left:1533px;top:672px" width="17" height="7" viewBox="0 0 17 7"><circle cx="2.5" cy="3.2" r="2.3" fill="#000"/><circle cx="8.5" cy="3.2" r="2.3" fill="#000"/><circle cx="14.5" cy="3.2" r="2.3" fill="#000"/></svg>
<div style="position:absolute;left:258px;top:702px;width:1310px;height:1px;background:#dfe3e8;"></div>
<div style="position:absolute;left:270px;top:722px;width:16px;height:16px;box-sizing:border-box;border:1px solid #c3c7cc;border-radius:3px;background:linear-gradient(#fff,#f3f4f6);"></div>
<div style="position:absolute;left:310px;top:723px;font-size:14px;line-height:14px;color:#2d62de;white-space:nowrap;letter-spacing:-0.005px;-webkit-text-stroke:0.25px #2d62de;">Blackberry wine</div>
<div style="position:absolute;left:645px;top:723px;font-size:14px;line-height:14px;color:#e5841f;white-space:nowrap;letter-spacing:0.016px;-webkit-text-stroke:0.25px #e5841f;">Not linked</div>
<div style="position:absolute;left:819.5px;top:723px;font-size:14px;line-height:14px;color:#3a3d42;white-space:nowrap;-webkit-text-stroke:0.25px #3a3d42;">Item</div>
<div style="position:absolute;left:965px;top:723px;font-size:14px;line-height:14px;color:#3a3d42;white-space:nowrap;letter-spacing:-0.201px;-webkit-text-stroke:0.25px #3a3d42;">EN Drinks</div>
<div style="position:absolute;left:1198px;top:723px;font-size:14px;line-height:14px;color:#3a3d42;white-space:nowrap;-webkit-text-stroke:0.25px #3a3d42;">$6.00</div>
<svg style="position:absolute;left:1533px;top:726px" width="17" height="7" viewBox="0 0 17 7"><circle cx="2.5" cy="3.2" r="2.3" fill="#000"/><circle cx="8.5" cy="3.2" r="2.3" fill="#000"/><circle cx="14.5" cy="3.2" r="2.3" fill="#000"/></svg>
<div style="position:absolute;left:258px;top:756px;width:1310px;height:1px;background:#dfe3e8;"></div>
<div style="position:absolute;left:270px;top:776px;width:16px;height:16px;box-sizing:border-box;border:1px solid #c3c7cc;border-radius:3px;background:linear-gradient(#fff,#f3f4f6);"></div>
<div style="position:absolute;left:310px;top:777px;font-size:14px;line-height:14px;color:#2d62de;white-space:nowrap;letter-spacing:-0.278px;-webkit-text-stroke:0.25px #2d62de;">Breakfast Special</div>
<div style="position:absolute;left:646.5px;top:777px;font-size:14px;line-height:14px;color:#23a33a;white-space:nowrap;letter-spacing:-0.256px;-webkit-text-stroke:0.25px #23a33a;">1 link</div>
<div style="position:absolute;left:813.5px;top:777px;font-size:14px;line-height:14px;color:#3a3d42;white-space:nowrap;-webkit-text-stroke:0.25px #3a3d42;">Combo</div>
<div style="position:absolute;left:965px;top:777px;font-size:14px;line-height:14px;color:#3a3d42;white-space:nowrap;letter-spacing:-0.641px;-webkit-text-stroke:0.25px #3a3d42;">EN Food</div>
<div style="position:absolute;left:1198px;top:777px;font-size:14px;line-height:14px;color:#3a3d42;white-space:nowrap;-webkit-text-stroke:0.25px #3a3d42;">$15.00</div>
<svg style="position:absolute;left:1533px;top:780px" width="17" height="7" viewBox="0 0 17 7"><circle cx="2.5" cy="3.2" r="2.3" fill="#000"/><circle cx="8.5" cy="3.2" r="2.3" fill="#000"/><circle cx="14.5" cy="3.2" r="2.3" fill="#000"/></svg>
<div style="position:absolute;left:258px;top:810px;width:1310px;height:1px;background:#dfe3e8;"></div>
<div style="position:absolute;left:270px;top:830px;width:16px;height:16px;box-sizing:border-box;border:1px solid #c3c7cc;border-radius:3px;background:linear-gradient(#fff,#f3f4f6);"></div>
<div style="position:absolute;left:310px;top:831px;font-size:14px;line-height:14px;color:#2d62de;white-space:nowrap;letter-spacing:-0.014px;-webkit-text-stroke:0.25px #2d62de;">Bruschetta</div>
<div style="position:absolute;left:646.5px;top:831px;font-size:14px;line-height:14px;color:#23a33a;white-space:nowrap;letter-spacing:-0.256px;-webkit-text-stroke:0.25px #23a33a;">1 link</div>
<div style="position:absolute;left:819.5px;top:831px;font-size:14px;line-height:14px;color:#3a3d42;white-space:nowrap;-webkit-text-stroke:0.25px #3a3d42;">Item</div>
<div style="position:absolute;left:965px;top:831px;font-size:14px;line-height:14px;color:#3a3d42;white-space:nowrap;letter-spacing:-0.641px;-webkit-text-stroke:0.25px #3a3d42;">EN Food</div>
<div style="position:absolute;left:1198px;top:831px;font-size:14px;line-height:14px;color:#3a3d42;white-space:nowrap;-webkit-text-stroke:0.25px #3a3d42;">$8.00</div>
<div style="position:absolute;left:1364px;top:831px;font-size:14px;line-height:14px;color:#3a3d42;white-space:nowrap;-webkit-text-stroke:0.25px #3a3d42;">$2.40</div>
<svg style="position:absolute;left:1533px;top:834px" width="17" height="7" viewBox="0 0 17 7"><circle cx="2.5" cy="3.2" r="2.3" fill="#000"/><circle cx="8.5" cy="3.2" r="2.3" fill="#000"/><circle cx="14.5" cy="3.2" r="2.3" fill="#000"/></svg>
<div style="position:absolute;left:258px;top:864px;width:1310px;height:1px;background:#dfe3e8;"></div>
<div style="position:absolute;left:270px;top:884px;width:16px;height:16px;box-sizing:border-box;border:1px solid #c3c7cc;border-radius:3px;background:linear-gradient(#fff,#f3f4f6);"></div>
<div style="position:absolute;left:310px;top:885px;font-size:14px;line-height:14px;color:#2d62de;white-space:nowrap;letter-spacing:0.390px;-webkit-text-stroke:0.25px #2d62de;">Butter</div>
<div style="position:absolute;left:646.5px;top:885px;font-size:14px;line-height:14px;color:#23a33a;white-space:nowrap;letter-spacing:-0.256px;-webkit-text-stroke:0.25px #23a33a;">1 link</div>
<div style="position:absolute;left:819.5px;top:885px;font-size:14px;line-height:14px;color:#3a3d42;white-space:nowrap;-webkit-text-stroke:0.25px #3a3d42;">Item</div>
<div style="position:absolute;left:965px;top:885px;font-size:14px;line-height:14px;color:#3a3d42;white-space:nowrap;letter-spacing:-0.641px;-webkit-text-stroke:0.25px #3a3d42;">EN Food</div>
<div style="position:absolute;left:1198px;top:885px;font-size:14px;line-height:14px;color:#3a3d42;white-space:nowrap;-webkit-text-stroke:0.25px #3a3d42;">$3.00</div>
<div style="position:absolute;left:1364px;top:885px;font-size:14px;line-height:14px;color:#3a3d42;white-space:nowrap;-webkit-text-stroke:0.25px #3a3d42;">$0.90</div>
<svg style="position:absolute;left:1533px;top:888px" width="17" height="7" viewBox="0 0 17 7"><circle cx="2.5" cy="3.2" r="2.3" fill="#000"/><circle cx="8.5" cy="3.2" r="2.3" fill="#000"/><circle cx="14.5" cy="3.2" r="2.3" fill="#000"/></svg>
<div style="position:absolute;left:258px;top:918px;width:1310px;height:1px;background:#dfe3e8;"></div>
<div style="position:absolute;left:270px;top:938px;width:16px;height:16px;box-sizing:border-box;border:1px solid #c3c7cc;border-radius:3px;background:linear-gradient(#fff,#f3f4f6);"></div>
<div style="position:absolute;left:310px;top:939px;font-size:14px;line-height:14px;color:#2d62de;white-space:nowrap;letter-spacing:-0.326px;-webkit-text-stroke:0.25px #2d62de;">Cappuccino</div>
<div style="position:absolute;left:646.5px;top:939px;font-size:14px;line-height:14px;color:#23a33a;white-space:nowrap;letter-spacing:-0.256px;-webkit-text-stroke:0.25px #23a33a;">1 link</div>
<div style="position:absolute;left:819.5px;top:939px;font-size:14px;line-height:14px;color:#3a3d42;white-space:nowrap;-webkit-text-stroke:0.25px #3a3d42;">Item</div>
<div style="position:absolute;left:965px;top:939px;font-size:14px;line-height:14px;color:#3a3d42;white-space:nowrap;letter-spacing:-0.292px;-webkit-text-stroke:0.25px #3a3d42;">EN Coffee</div>
<div style="position:absolute;left:1198px;top:939px;font-size:14px;line-height:14px;color:#3a3d42;white-space:nowrap;-webkit-text-stroke:0.25px #3a3d42;">$3.50</div>
<div style="position:absolute;left:1364px;top:939px;font-size:14px;line-height:14px;color:#3a3d42;white-space:nowrap;-webkit-text-stroke:0.25px #3a3d42;">$1.05</div>
<svg style="position:absolute;left:1533px;top:942px" width="17" height="7" viewBox="0 0 17 7"><circle cx="2.5" cy="3.2" r="2.3" fill="#000"/><circle cx="8.5" cy="3.2" r="2.3" fill="#000"/><circle cx="14.5" cy="3.2" r="2.3" fill="#000"/></svg>
<div style="position:absolute;left:258px;top:972px;width:1310px;height:1px;background:#dfe3e8;"></div>
<div style="position:absolute;left:270px;top:992px;width:16px;height:16px;box-sizing:border-box;border:1px solid #c3c7cc;border-radius:3px;background:linear-gradient(#fff,#f3f4f6);"></div>
<div style="position:absolute;left:310px;top:993px;font-size:14px;line-height:14px;color:#2d62de;white-space:nowrap;letter-spacing:-0.634px;-webkit-text-stroke:0.25px #2d62de;">Cashew Salad</div>
<div style="position:absolute;left:645px;top:993px;font-size:14px;line-height:14px;color:#e5841f;white-space:nowrap;letter-spacing:0.016px;-webkit-text-stroke:0.25px #e5841f;">Not linked</div>
<div style="position:absolute;left:819.5px;top:993px;font-size:14px;line-height:14px;color:#3a3d42;white-space:nowrap;-webkit-text-stroke:0.25px #3a3d42;">Item</div>
<div style="position:absolute;left:965px;top:993px;font-size:14px;line-height:14px;color:#3a3d42;white-space:nowrap;letter-spacing:-0.641px;-webkit-text-stroke:0.25px #3a3d42;">EN Food</div>
<div style="position:absolute;left:1198px;top:993px;font-size:14px;line-height:14px;color:#3a3d42;white-space:nowrap;-webkit-text-stroke:0.25px #3a3d42;">$13.99</div>
<svg style="position:absolute;left:1533px;top:996px" width="17" height="7" viewBox="0 0 17 7"><circle cx="2.5" cy="3.2" r="2.3" fill="#000"/><circle cx="8.5" cy="3.2" r="2.3" fill="#000"/><circle cx="14.5" cy="3.2" r="2.3" fill="#000"/></svg>
<div style="position:absolute;left:258px;top:1026px;width:1310px;height:1px;background:#dfe3e8;"></div>
<div style="position:absolute;left:270px;top:1046px;width:16px;height:16px;box-sizing:border-box;border:1px solid #c3c7cc;border-radius:3px;background:linear-gradient(#fff,#f3f4f6);"></div>
<div style="position:absolute;left:310px;top:1047px;font-size:14px;line-height:14px;color:#2d62de;white-space:nowrap;letter-spacing:-0.345px;-webkit-text-stroke:0.25px #2d62de;">Chicken Sandwich</div>
<div style="position:absolute;left:645px;top:1047px;font-size:14px;line-height:14px;color:#e5841f;white-space:nowrap;letter-spacing:0.016px;-webkit-text-stroke:0.25px #e5841f;">Not linked</div>
<div style="position:absolute;left:819.5px;top:1047px;font-size:14px;line-height:14px;color:#3a3d42;white-space:nowrap;-webkit-text-stroke:0.25px #3a3d42;">Item</div>
<div style="position:absolute;left:965px;top:1047px;font-size:14px;line-height:14px;color:#3a3d42;white-space:nowrap;letter-spacing:-0.641px;-webkit-text-stroke:0.25px #3a3d42;">EN Food</div>
<div style="position:absolute;left:1198px;top:1047px;font-size:14px;line-height:14px;color:#3a3d42;white-space:nowrap;-webkit-text-stroke:0.25px #3a3d42;">$9.99</div>
<svg style="position:absolute;left:1533px;top:1050px" width="17" height="7" viewBox="0 0 17 7"><circle cx="2.5" cy="3.2" r="2.3" fill="#000"/><circle cx="8.5" cy="3.2" r="2.3" fill="#000"/><circle cx="14.5" cy="3.2" r="2.3" fill="#000"/></svg>
<div style="position:absolute;left:258px;top:1080px;width:1310px;height:1px;background:#dfe3e8;"></div>
<div style="position:absolute;left:270px;top:1100px;width:16px;height:16px;box-sizing:border-box;border:1px solid #c3c7cc;border-radius:3px;background:linear-gradient(#fff,#f3f4f6);"></div>
<div style="position:absolute;left:310px;top:1101px;font-size:14px;line-height:14px;color:#2d62de;white-space:nowrap;letter-spacing:-0.212px;-webkit-text-stroke:0.25px #2d62de;">Collard Greens</div>
<div style="position:absolute;left:645px;top:1101px;font-size:14px;line-height:14px;color:#e5841f;white-space:nowrap;letter-spacing:0.016px;-webkit-text-stroke:0.25px #e5841f;">Not linked</div>
<div style="position:absolute;left:819.5px;top:1101px;font-size:14px;line-height:14px;color:#3a3d42;white-space:nowrap;-webkit-text-stroke:0.25px #3a3d42;">Item</div>
<div style="position:absolute;left:965px;top:1101px;font-size:14px;line-height:14px;color:#3a3d42;white-space:nowrap;letter-spacing:-0.641px;-webkit-text-stroke:0.25px #3a3d42;">EN Food</div>
<div style="position:absolute;left:1198px;top:1101px;font-size:14px;line-height:14px;color:#3a3d42;white-space:nowrap;-webkit-text-stroke:0.25px #3a3d42;">$7.99</div>
<svg style="position:absolute;left:1533px;top:1104px" width="17" height="7" viewBox="0 0 17 7"><circle cx="2.5" cy="3.2" r="2.3" fill="#000"/><circle cx="8.5" cy="3.2" r="2.3" fill="#000"/><circle cx="14.5" cy="3.2" r="2.3" fill="#000"/></svg>
<div style="position:absolute;left:258px;top:1134px;width:1310px;height:1px;background:#dfe3e8;"></div>
<div style="position:absolute;left:270px;top:1154px;width:16px;height:16px;box-sizing:border-box;border:1px solid #c3c7cc;border-radius:3px;background:linear-gradient(#fff,#f3f4f6);"></div>
<div style="position:absolute;left:310px;top:1155px;font-size:14px;line-height:14px;color:#2d62de;white-space:nowrap;letter-spacing:0.099px;-webkit-text-stroke:0.25px #2d62de;">Cortado</div>
<div style="position:absolute;left:646.5px;top:1155px;font-size:14px;line-height:14px;color:#23a33a;white-space:nowrap;letter-spacing:-0.214px;-webkit-text-stroke:0.25px #23a33a;">2 links</div>
<div style="position:absolute;left:819.5px;top:1155px;font-size:14px;line-height:14px;color:#3a3d42;white-space:nowrap;-webkit-text-stroke:0.25px #3a3d42;">Item</div>
<div style="position:absolute;left:965px;top:1155px;font-size:14px;line-height:14px;color:#3a3d42;white-space:nowrap;letter-spacing:-0.292px;-webkit-text-stroke:0.25px #3a3d42;">EN Coffee</div>
<div style="position:absolute;left:1198px;top:1155px;font-size:14px;line-height:14px;color:#3a3d42;white-space:nowrap;-webkit-text-stroke:0.25px #3a3d42;">$4.50</div>
<div style="position:absolute;left:1364px;top:1155px;font-size:14px;line-height:14px;color:#3a3d42;white-space:nowrap;-webkit-text-stroke:0.25px #3a3d42;">$1.35</div>
<svg style="position:absolute;left:1533px;top:1158px" width="17" height="7" viewBox="0 0 17 7"><circle cx="2.5" cy="3.2" r="2.3" fill="#000"/><circle cx="8.5" cy="3.2" r="2.3" fill="#000"/><circle cx="14.5" cy="3.2" r="2.3" fill="#000"/></svg>
<div style="position:absolute;left:258px;top:1188px;width:1310px;height:1px;background:#dfe3e8;"></div>
<div style="position:absolute;left:270px;top:1208px;width:16px;height:16px;box-sizing:border-box;border:1px solid #c3c7cc;border-radius:3px;background:linear-gradient(#fff,#f3f4f6);"></div>
<div style="position:absolute;left:310px;top:1209px;font-size:14px;line-height:14px;color:#2d62de;white-space:nowrap;-webkit-text-stroke:0.25px #2d62de;">Croissant</div>
<div style="position:absolute;left:646.5px;top:1209px;font-size:14px;line-height:14px;color:#23a33a;white-space:nowrap;letter-spacing:-0.256px;-webkit-text-stroke:0.25px #23a33a;">1 link</div>
<div style="position:absolute;left:819.5px;top:1209px;font-size:14px;line-height:14px;color:#3a3d42;white-space:nowrap;-webkit-text-stroke:0.25px #3a3d42;">Item</div>
<div style="position:absolute;left:965px;top:1209px;font-size:14px;line-height:14px;color:#3a3d42;white-space:nowrap;letter-spacing:-0.431px;-webkit-text-stroke:0.25px #3a3d42;">EN Pastries</div>
<div style="position:absolute;left:1198px;top:1209px;font-size:14px;line-height:14px;color:#3a3d42;white-space:nowrap;-webkit-text-stroke:0.25px #3a3d42;">$3.50</div>
<div style="position:absolute;left:1364px;top:1209px;font-size:14px;line-height:14px;color:#3a3d42;white-space:nowrap;-webkit-text-stroke:0.25px #3a3d42;">$1.05</div>
<svg style="position:absolute;left:1533px;top:1212px" width="17" height="7" viewBox="0 0 17 7"><circle cx="2.5" cy="3.2" r="2.3" fill="#000"/><circle cx="8.5" cy="3.2" r="2.3" fill="#000"/><circle cx="14.5" cy="3.2" r="2.3" fill="#000"/></svg>
<div style="position:absolute;left:258px;top:1242px;width:1310px;height:1px;background:#dfe3e8;"></div>
<div style="position:absolute;left:1374px;top:485px;width:177px;height:120px;box-sizing:border-box;background:#fff;border:1px solid #d9dce0;border-radius:7px;box-shadow:0 2px 6px rgba(0,0,0,0.12);"></div>
<div style="position:absolute;left:1393px;top:525px;width:61px;height:18px;background:#dcdee2;"></div>
<div style="position:absolute;left:1393.5px;top:503px;font-size:14px;line-height:14px;color:#3a3d42;white-space:nowrap;letter-spacing:0.125px;-webkit-text-stroke:0.45px #3a3d42;">Edit</div>
<div style="position:absolute;left:1393.5px;top:527px;font-size:14px;line-height:14px;color:#3a3d42;white-space:nowrap;letter-spacing:0.204px;-webkit-text-stroke:0.45px #3a3d42;">Duplicate</div>
<div style="position:absolute;left:1393.5px;top:550px;font-size:14px;line-height:14px;color:#3a3d42;white-space:nowrap;letter-spacing:0.067px;-webkit-text-stroke:0.45px #3a3d42;">Convert to combo</div>
<div style="position:absolute;left:1393.5px;top:574px;font-size:14px;line-height:14px;color:#e0161b;white-space:nowrap;letter-spacing:0.220px;-webkit-text-stroke:0.45px #e0161b;">Archive</div>
<div style="position:absolute;left:1533px;top:1132px;width:48px;height:48px;background:#1b1c20;border-radius:50%;box-shadow:0 2px 8px rgba(0,0,0,0.2);"></div>
<svg style="position:absolute;left:1549px;top:1145.5px" width="17.6" height="21.4" viewBox="0 0 28 34"><path d="M13 3.8 L17.5 10.8 L18.6 12 L22.3 19.5 L14.2 30.2 L11.8 30.2 L3.8 19.5 Z" fill="#e8262b"/><path d="M15.6 5.6 L7.7 19.5 L13 26.4 L18.9 19.2 M18.3 10.6 L12.4 19.7" fill="none" stroke="#1b1c20" stroke-width="1.35" stroke-linejoin="miter"/></svg>
</div></body></html>
